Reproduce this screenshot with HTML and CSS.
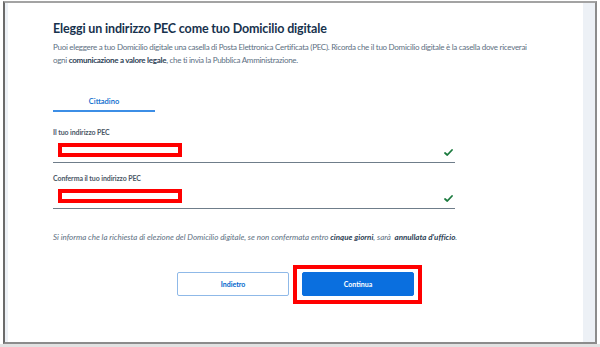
FILE: index.html
```html
<!DOCTYPE html>
<html lang="it">
<head>
<meta charset="utf-8">
<title>Domicilio digitale</title>
<link rel="stylesheet" href="styles.css">
</head>
<body>
<div class="frame">
  <div class="side side-left"></div>
  <main class="main">
    <section class="content">
      <h1 class="title">Eleggi un indirizzo PEC come tuo Domicilio digitale</h1>
      <p class="intro">Puoi eleggere a tuo Domicilio digitale una casella di Posta Elettronica Certificata (PEC). Ricorda che il tuo Domicilio digitale è la casella dove riceverai<br>ogni <b>comunicazione a valore legale</b>, che ti invia la Pubblica Amministrazione.</p>
      <div class="tabs"><div class="tab">Cittadino</div></div>
      <label class="label">Il tuo indirizzo PEC</label>
      <div class="field">
        <span class="redact"></span>
        <svg class="check" viewBox="0 0 9 7" width="9" height="7"><path d="M1 4 L3.3 6 L8 1" fill="none" stroke="#1b7a3e" stroke-width="1.8" stroke-linecap="round" stroke-linejoin="round"/></svg>
      </div>
      <label class="label label-2">Conferma il tuo indirizzo PEC</label>
      <div class="field">
        <span class="redact"></span>
        <svg class="check" viewBox="0 0 9 7" width="9" height="7"><path d="M1 4 L3.3 6 L8 1" fill="none" stroke="#1b7a3e" stroke-width="1.8" stroke-linecap="round" stroke-linejoin="round"/></svg>
      </div>
      <p class="info">Si informa che la richiesta di elezione del Domicilio digitale, se non confermata entro <b>cinque giorni</b>, sarà &nbsp;<b>annullata d'ufficio</b>.</p>
    </section>
    <div class="actions">
      <button class="btn btn-outline">Indietro</button>
      <button class="btn btn-primary">Continua<span class="highlight"></span></button>
    </div>
  </main>
  <div class="side side-right"></div>
</div>
<div class="bottom-band"></div>
</body>
</html>
```
FILE: styles.css
```css
html, body {
  margin: 0;
  padding: 0;
  background: #ffffff;
}
body {
  width: 600px;
  height: 347px;
  overflow: hidden;
  font-family: "Lato", "Liberation Sans", sans-serif;
  padding-top: 1px;
  box-sizing: border-box;
}
.frame {
  margin-left: 3px;
  width: 594px;
  height: 343px;
  box-sizing: border-box;
  border-top: 2px solid #a3a3a3;
  border-left: 2px solid #6b6b6b;
  border-right: 2px solid #8c8c8c;
  border-bottom: 2px solid #8c8c8c;
  display: flex;
  background: #ffffff;
}
.side {
  background: #edf1f6;
  flex: none;
}
.side-left { width: 3px; }
.side-right { width: 12px; }
.main {
  flex: 1;
  display: flex;
  flex-direction: column;
}
.content {
  padding: 18px 20px 0 45px;
}
.title {
  margin: 0;
  font-size: 12.5px;
  line-height: 16px;
  font-weight: 700;
  color: #17324d;
  letter-spacing: -0.15px;
}
.intro {
  margin: 3.5px 0 0;
  font-size: 8px;
  line-height: 13px;
  color: #5c6f82;
  letter-spacing: -0.28px;
  white-space: nowrap;
}
.intro b { color: #2e4256; font-weight: 700; }
.tabs {
  margin-top: 29.5px;
  display: flex;
}
.tab {
  width: 102px;
  text-align: center;
  font-size: 7.5px;
  line-height: 12px;
  font-weight: 600;
  color: #0066cc;
  padding-bottom: 2px;
  border-bottom: 2px solid #3c8ee6;
}
.label {
  display: block;
  margin-top: 15px;
  font-size: 7px;
  line-height: 10px;
  font-weight: 700;
  color: #4b5866;
  letter-spacing: -0.1px;
}
.label-2 { margin-top: 10px; }
.field {
  position: relative;
  width: 402px;
  height: 25px;
  border-bottom: 1px solid #6f7d8a;
}
.redact {
  position: absolute;
  left: 5px;
  top: 6px;
  width: 124px;
  height: 14px;
  box-sizing: border-box;
  border: 4px solid #ff0000;
  background: #ffffff;
}
.check {
  position: absolute;
  right: 2px;
  top: 12px;
}
.info {
  margin: 22px 0 0;
  font-size: 8px;
  line-height: 12px;
  font-style: italic;
  color: #5c6f82;
  letter-spacing: -0.02px;
}
.info b { color: #2e4256; font-weight: 700; }
.actions {
  margin-top: 29px;
  display: flex;
  justify-content: center;
  gap: 13px;
}
.btn {
  position: relative;
  width: 112px;
  height: 24px;
  box-sizing: border-box;
  border-radius: 2px;
  font-family: "Lato", "Liberation Sans", sans-serif;
  font-size: 7px;
  font-weight: 700;
  padding: 0;
  cursor: pointer;
}
.btn-outline {
  background: #ffffff;
  border: 1px solid #8fb9e8;
  color: #0066cc;
}
.btn-primary {
  background: #0a6fdf;
  border: 1px solid #0a6fdf;
  color: #ffffff;
}
.highlight {
  position: absolute;
  left: -10px;
  top: -8px;
  right: -9px;
  bottom: -9px;
  border: 4px solid #ff0000;
  pointer-events: none;
}
.bottom-band {
  height: 3px;
  background: #e2e2e2;
}
```
